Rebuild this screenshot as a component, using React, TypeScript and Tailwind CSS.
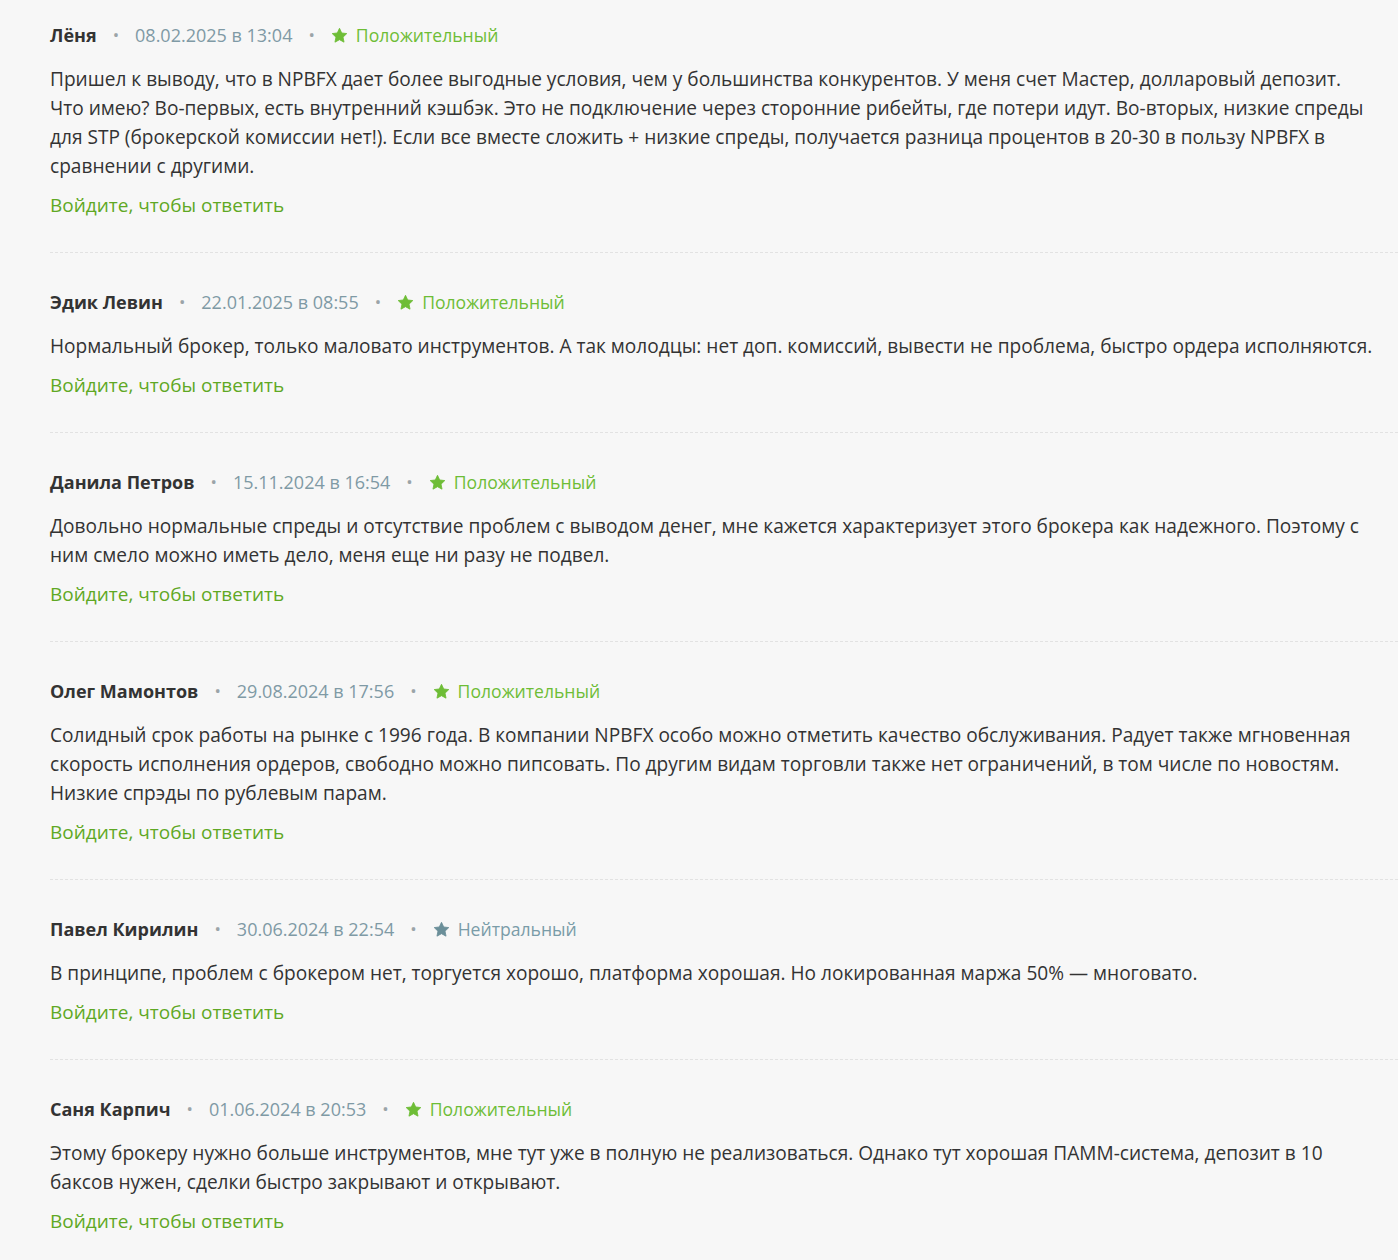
import React from "react";

type Review = {
  name: string;
  date: string;
  tone: "positive" | "neutral";
  text: string;
};

const reviews: Review[] = [
  {
    name: "Лёня",
    date: "08.02.2025 в 13:04",
    tone: "positive",
    text: "Пришел к выводу, что в NPBFX дает более выгодные условия, чем у большинства конкурентов. У меня счет Мастер, долларовый депозит. Что имею? Во-первых, есть внутренний кэшбэк. Это не подключение через сторонние рибейты, где потери идут. Во-вторых, низкие спреды для STP (брокерской комиссии нет!). Если все вместе сложить + низкие спреды, получается разница процентов в 20-30 в пользу NPBFX в сравнении с другими.",
  },
  {
    name: "Эдик Левин",
    date: "22.01.2025 в 08:55",
    tone: "positive",
    text: "Нормальный брокер, только маловато инструментов. А так молодцы: нет доп. комиссий, вывести не проблема, быстро ордера исполняются.",
  },
  {
    name: "Данила Петров",
    date: "15.11.2024 в 16:54",
    tone: "positive",
    text: "Довольно нормальные спреды и отсутствие проблем с выводом денег, мне кажется характеризует этого брокера как надежного. Поэтому с ним смело можно иметь дело, меня еще ни разу не подвел.",
  },
  {
    name: "Олег Мамонтов",
    date: "29.08.2024 в 17:56",
    tone: "positive",
    text: "Солидный срок работы на рынке с 1996 года. В компании NPBFX особо можно отметить качество обслуживания. Радует также мгновенная скорость исполнения ордеров, свободно можно пипсовать. По другим видам торговли также нет ограничений, в том числе по новостям. Низкие спрэды по рублевым парам.",
  },
  {
    name: "Павел Кирилин",
    date: "30.06.2024 в 22:54",
    tone: "neutral",
    text: "В принципе, проблем с брокером нет, торгуется хорошо, платформа хорошая. Но локированная маржа 50% — многовато.",
  },
  {
    name: "Саня Карпич",
    date: "01.06.2024 в 20:53",
    tone: "positive",
    text: "Этому брокеру нужно больше инструментов, мне тут уже в полную не реализоваться. Однако тут хорошая ПАММ-система, депозит в 10 баксов нужен, сделки быстро закрывают и открывают.",
  },
];

function StarIcon({ className }: { className: string }) {
  return (
    <svg viewBox="0 0 24 24" className={className} aria-hidden="true">
      <path
        d="M12 1.8l3.1 6.6 7.2.9-5.3 5 1.4 7.1L12 17.9l-6.4 3.5 1.4-7.1-5.3-5 7.2-.9z"
        fill="currentColor"
        stroke="currentColor"
        strokeWidth="1.2"
        strokeLinejoin="round"
      />
    </svg>
  );
}

function Dot() {
  return <span className="mx-[16px] text-[17px] text-[#9ba4a8]">•</span>;
}

function ReviewItem({ review, last }: { review: Review; last: boolean }) {
  const positive = review.tone === "positive";
  return (
    <div
      className={
        last
          ? "pt-[37px]"
          : "border-b border-dashed border-[#e2e2e2] pt-[37px] pb-[32px] first:pt-[23px]"
      }
    >
      <div className="flex h-6 items-center text-[18px] leading-6">
        <span className="font-bold text-[#333]">{review.name}</span>
        <Dot />
        <span className="text-[#7f9aa5]">{review.date}</span>
        <Dot />
        <span
          className={
            positive
              ? "flex items-center gap-[8px] text-[17.6px] text-[#6ebd36]"
              : "flex items-center gap-[8px] text-[17.6px] text-[#7a9ca8]"
          }
        >
          <StarIcon
            className={positive ? "h-[17px] w-[17px] text-[#6ebd36]" : "h-[17px] w-[17px] text-[#6b8f99]"}
          />
          {positive ? "Положительный" : "Нейтральный"}
        </span>
      </div>
      <p className="mt-[18px] pr-[22px] text-[19.1px] leading-[29px] text-[#333]">{review.text}</p>
      <a href="#" className="mt-[10px] block text-[19px] leading-[29px] text-[#5fa824]">
        Войдите, чтобы ответить
      </a>
    </div>
  );
}

export default function App() {
  return (
    <div
      className="min-h-[1260px] bg-[#f7f7f7] pl-[50px]"
      style={{ fontFamily: '"Open Sans", "Noto Sans", sans-serif' }}
    >
      {reviews.map((r, i) => (
        <ReviewItem key={r.date} review={r} last={i === reviews.length - 1} />
      ))}
    </div>
  );
}
